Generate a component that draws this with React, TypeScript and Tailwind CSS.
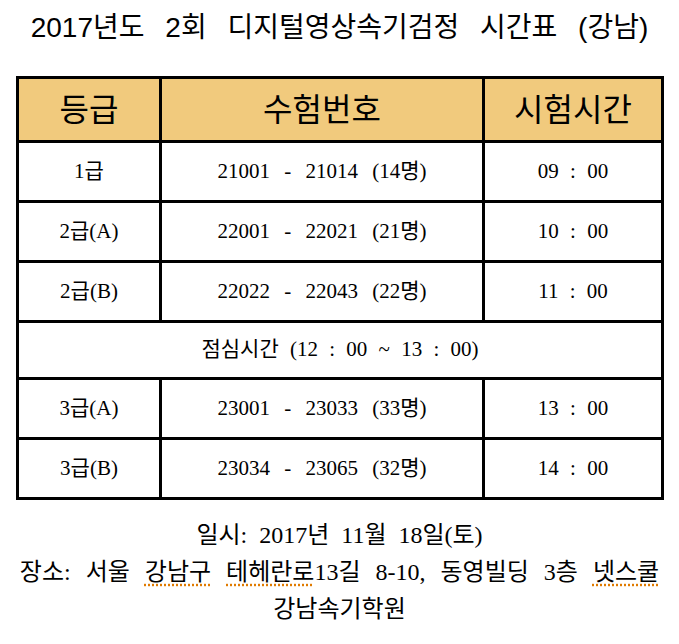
const sans = "font-['Liberation_Sans','Noto_Sans_CJK_KR',sans-serif]";
const serif = "font-['Liberation_Serif','Noto_Sans_CJK_KR',serif]";

const rows = [
  { grade: "1급", range: "21001 - 21014 (14명)", time: "09 : 00" },
  { grade: "2급(A)", range: "22001 - 22021 (21명)", time: "10 : 00" },
  { grade: "2급(B)", range: "22022 - 22043 (22명)", time: "11 : 00" },
  null,
  { grade: "3급(A)", range: "23001 - 23033 (33명)", time: "13 : 00" },
  { grade: "3급(B)", range: "23034 - 23065 (32명)", time: "14 : 00" },
];

const spell = "underline decoration-[#e07b00] decoration-dotted underline-offset-4";

export default function App() {
  return (
    <div className="h-[644px] w-[679px] bg-white text-black">
      <h1
        className={`${sans} pt-[10px] text-center text-[28px] leading-[36px] [word-spacing:13px]`}
      >
        2017년도 2회 디지털영상속기검정 시간표 (강남)
      </h1>

      <table className="ml-[16px] mt-[30px] w-[648px] border-collapse border-[3px] border-black">
        <colgroup>
          <col className="w-[143px]" />
          <col className="w-[323px]" />
          <col />
        </colgroup>
        <thead>
          <tr className="h-[64px] bg-[#f1ca7d]">
            {["등급", "수험번호", "시험시간"].map((h) => (
              <th
                key={h}
                className={`${sans} border-[3px] border-black text-[32px] font-normal`}
              >
                {h}
              </th>
            ))}
          </tr>
        </thead>
        <tbody className={`${serif} text-[21px]`}>
          {rows.map((r, i) =>
            r ? (
              <tr key={i} className="h-[60px]">
                <td className="border-[3px] border-black text-center">{r.grade}</td>
                <td className="border-[3px] border-black text-center [word-spacing:9px]">
                  {r.range}
                </td>
                <td className="border-[3px] border-black text-center [word-spacing:6px]">
                  {r.time}
                </td>
              </tr>
            ) : (
              <tr key={i} className="h-[57px]">
                <td
                  colSpan={3}
                  className="border-[3px] border-black text-center [word-spacing:6px]"
                >
                  점심시간 (12 : 00 ~ 13 : 00)
                </td>
              </tr>
            )
          )}
        </tbody>
      </table>

      <div className={`${serif} mt-[17px] text-center text-[24px] leading-[37px]`}>
        <p className="[word-spacing:6px]">일시: 2017년 11월 18일(토)</p>
        <p className="whitespace-nowrap [word-spacing:9px]">
          장소: 서울 <span className={spell}>강남구</span>{" "}
          <span className={spell}>테헤란로</span>13길 8-10, 동영빌딩 3층{" "}
          <span className={spell}>넷스쿨</span>
        </p>
        <p>강남속기학원</p>
      </div>
    </div>
  );
}
